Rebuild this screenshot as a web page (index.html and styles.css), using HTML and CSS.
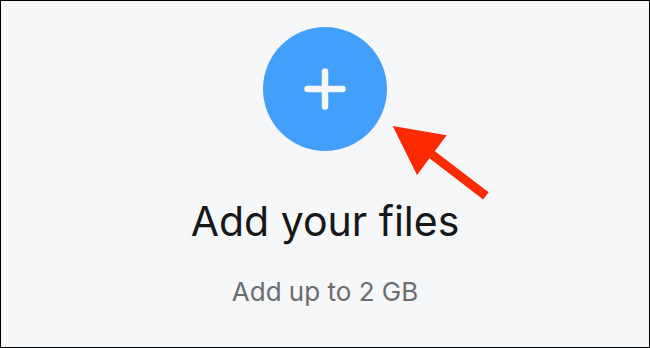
FILE: index.html
```html
<!DOCTYPE html>
<html>
<head>
<meta charset="utf-8">
<link rel="stylesheet" href="styles.css">
</head>
<body>
<div class="page">
  <button class="add-btn" aria-label="Add files">
    <svg class="plus" width="42" height="42" viewBox="0 0 42 42">
      <path d="M21 3.5V38.5M3.5 21H38.5" stroke="#f6f7f9" stroke-width="6.5" stroke-linecap="round" fill="none"/>
    </svg>
  </button>
  <h1 class="title">Add your files</h1>
  <p class="subtitle">Add up to 2 GB</p>
  <svg class="arrow" width="110" height="85" viewBox="0 0 110 85">
    <polygon points="6.7,7 60.7,16.3 31,56" fill="#fe2a00"/>
    <line x1="40" y1="31" x2="99.9" y2="76.9" stroke="#fe2a00" stroke-width="9"/>
  </svg>
</div>
</body>
</html>
```

FILE: styles.css
```css
html, body {
  margin: 0;
  padding: 0;
}
.page {
  position: relative;
  width: 650px;
  height: 348px;
  box-sizing: border-box;
  border: 1px solid #000;
  background: #f6f7f9;
  display: flex;
  flex-direction: column;
  align-items: center;
  padding-top: 26px;
  font-family: Inter, "Noto Sans", sans-serif;
}
.add-btn {
  width: 124px;
  height: 124px;
  border-radius: 50%;
  border: none;
  padding: 0;
  margin: 0;
  background: #42a0fc;
  display: flex;
  align-items: center;
  justify-content: center;
}
.title {
  margin: 46px 0 0;
  font-size: 41px;
  line-height: 48px;
  font-weight: 400;
  color: #17181a;
}
.subtitle {
  margin: 32px 0 0;
  font-size: 26px;
  line-height: 30px;
  color: #6b6d70;
}
.arrow {
  position: absolute;
  left: 385px;
  top: 118px;
}
```
